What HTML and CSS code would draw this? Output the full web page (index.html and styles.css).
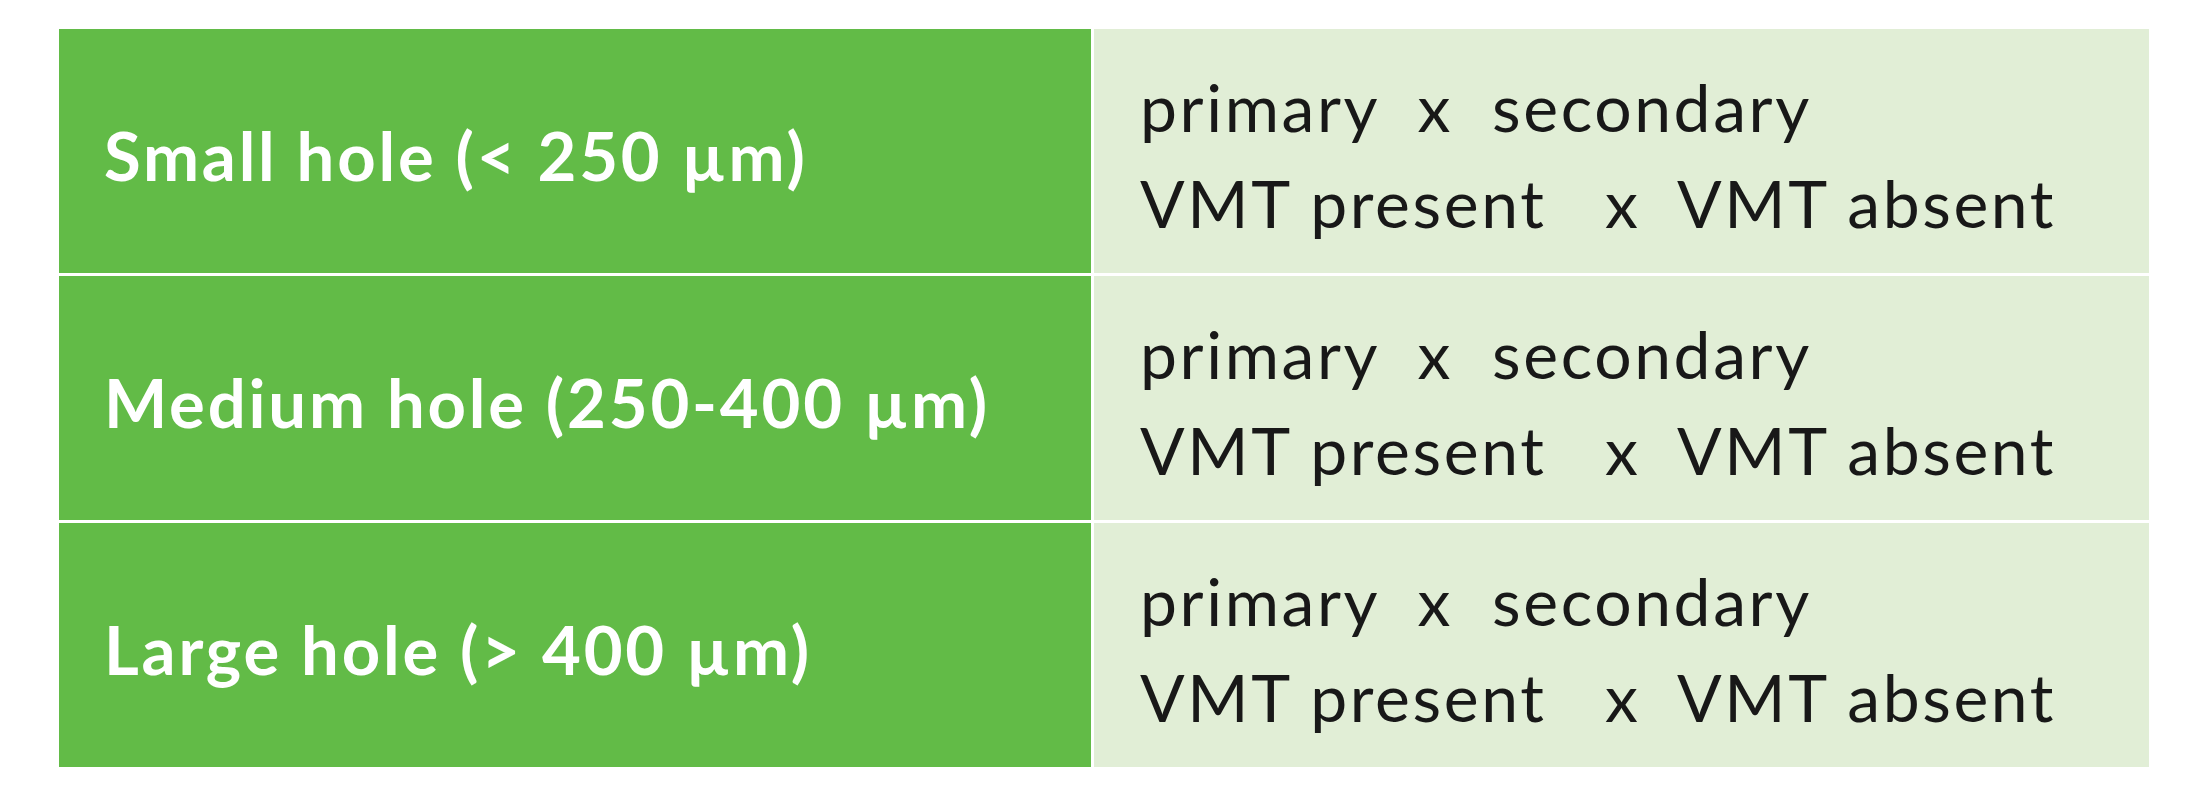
FILE: index.html
```html
<!DOCTYPE html>
<html>
<head>
<meta charset="utf-8">
<link rel="stylesheet" href="styles.css">
</head>
<body>
<div class="table">
  <div class="row">
    <div class="label">Small hole (&lt; 250 µm)</div>
    <div class="desc"><div class="line">primary  x  secondary</div><div class="line">VMT present   x  VMT absent</div></div>
  </div>
  <div class="row">
    <div class="label">Medium hole (250-400 µm)</div>
    <div class="desc"><div class="line">primary  x  secondary</div><div class="line">VMT present   x  VMT absent</div></div>
  </div>
  <div class="row">
    <div class="label">Large hole (&gt; 400 µm)</div>
    <div class="desc"><div class="line">primary  x  secondary</div><div class="line">VMT present   x  VMT absent</div></div>
  </div>
</div>
</body>
</html>
```

FILE: styles.css
```css
html, body {
  margin: 0;
  padding: 0;
  background: #ffffff;
}
body {
  width: 2190px;
  height: 800px;
  overflow: hidden;
}
.table {
  margin: 29px 0 0 59px;
  width: 2090px;
  display: flex;
  flex-direction: column;
  gap: 3px;
}
.row {
  display: grid;
  grid-template-columns: 1032px 1055px;
  column-gap: 3px;
  height: 244px;
}
.label {
  background: #62bb47;
  color: #ffffff;
  font-family: Lato, "Open Sans", sans-serif;
  font-weight: 700;
  font-size: 67px;
  letter-spacing: 2.8px;
  display: flex;
  align-items: center;
  box-sizing: border-box;
  padding: 7px 0 0 45px;
  white-space: pre;
}
.desc {
  background: #e1eed6;
  color: #181818;
  font-family: Lato, "Open Sans", sans-serif;
  font-weight: 400;
  font-size: 66px;
  letter-spacing: 2.6px;
  display: flex;
  flex-direction: column;
  justify-content: center;
  box-sizing: border-box;
  padding: 7px 0 0 46px;
}
.line {
  white-space: pre;
  line-height: 96px;
}
```
